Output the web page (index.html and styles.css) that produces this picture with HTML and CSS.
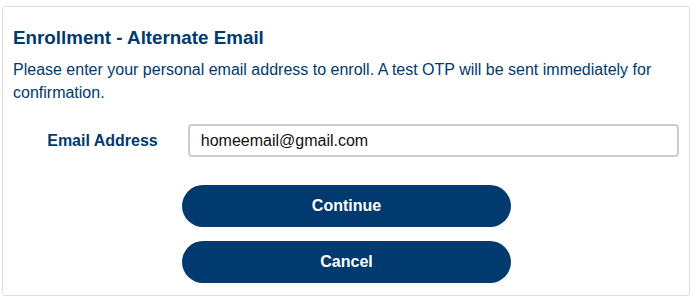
FILE: index.html
```html
<!DOCTYPE html>
<html>
    <head>
        <meta charset="utf-8">
        <title>Enrollment - Alternate Email</title>
        <link rel="stylesheet" href="styles.css">
    </head>
    <body>
        <div class="panel">
            <h2 class="title">Enrollment - Alternate Email</h2>
            <p class="intro">Please enter your personal email address to enroll. A test OTP will be sent immediately for confirmation.</p>

            <form class="enroll">
                <div class="row">
                    <label class="label" for="email">Email Address</label>
                    <input class="field" id="email" type="text" value="homeemail@gmail.com">
                </div>
                <div class="actions">
                    <button class="btn" type="button">Continue</button>
                    <button class="btn" type="button">Cancel</button>
                </div>
            </form>
        </div>
    </body>
</html>
```

FILE: styles.css
```css
* {
    box-sizing: border-box;
}
body {
    margin: 0;
    padding: 6px 0 0 2px;
    background: #fff;
    font-family: "Liberation Sans", Arial, sans-serif;
    color: #003a6e;
}

.panel {
    width: 688px;
    height: 290px;
    border: 1px solid #dedede;
    border-radius: 3px;
    padding: 18px 10px 0 10px;
}

.title {
    margin: 0;
    font-size: 18.8px;
    font-weight: bold;
    line-height: 26px;
}

.intro {
    margin: 7px 0 0 0;
    font-size: 16px;
    line-height: 23px;
}

.row {
    display: flex;
    align-items: center;
    margin-top: 20px;
}

.label {
    width: 145px;
    text-align: right;
    font-size: 16px;
    font-weight: bold;
    margin-right: 30px;
}

.field {
    width: 492px;
    height: 33px;
    border: 2px solid #ccc;
    border-radius: 4px;
    padding: 0 11px;
    font-family: "Liberation Sans", Arial, sans-serif;
    font-size: 16px;
    color: #111;
}

.actions {
    display: flex;
    flex-direction: column;
    gap: 14px;
    margin: 28px 0 0 169px;
}

.btn {
    width: 329px;
    height: 42px;
    border: 0;
    border-radius: 21px;
    background: #003a6e;
    color: #fff;
    font-family: "Liberation Sans", Arial, sans-serif;
    font-size: 16px;
    font-weight: bold;
}
```
